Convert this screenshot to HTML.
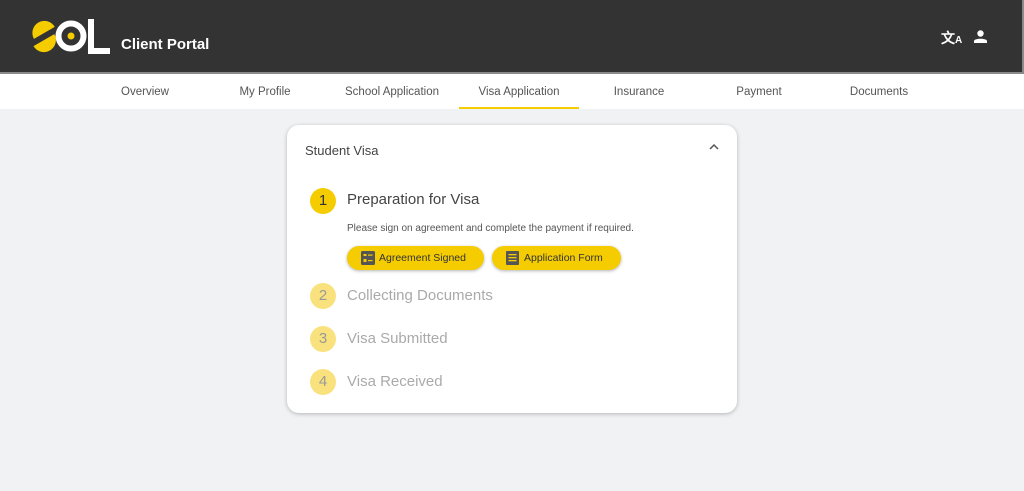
<!DOCTYPE html>
<html><head><meta charset="utf-8"><style>
*{margin:0;padding:0;box-sizing:border-box}
body{width:1024px;height:491px;background:#f1f2f4;font-family:"Liberation Sans",sans-serif;position:relative;overflow:hidden}
.hdr{position:absolute;left:0;top:0;width:1024px;height:74px;background:#333;border:2px solid #8a8a8a;border-top:none;border-left:none}
.cp{position:absolute;left:121px;top:36px;color:#fff;font-size:15px;font-weight:bold}
.nav{position:absolute;left:0;top:74px;width:1024px;height:35px;background:#fff}
.nav span{position:absolute;top:12px;font-size:11.5px;color:#555;text-align:center;width:120px}
.ul{position:absolute;left:459px;top:107px;width:120px;height:2px;background:#f5cc00}
.card{position:absolute;left:287px;top:125px;width:450px;height:288px;background:#fff;border-radius:12px;box-shadow:0 1px 4px rgba(0,0,0,.25)}
.t{position:absolute;left:18px;top:17px;font-size:13px;color:#444}
.chev{position:absolute;right:18px;top:18px}
.step{position:absolute;left:23px;width:26px;height:26px;border-radius:50%;background:#f9e27e;color:#999;font-size:15px;text-align:center;line-height:26px}
.step.a{background:#f5cc00;color:#333}
.lbl{position:absolute;left:60px;font-size:15px;color:#aaa}
.lbl.a{color:#444}
.desc{position:absolute;left:60px;top:98px;font-size:10px;color:#555}
.btn{position:absolute;top:121px;height:24px;border-radius:12px;background:#f5cc00;box-shadow:0 1px 3px rgba(0,0,0,.3);font-size:10.5px;color:#333;display:flex;align-items:center;padding-left:32px}
.btn svg{position:absolute;left:14px;top:5px}
</style></head><body>
<div class="hdr">
<svg style="position:absolute;left:0;top:0" width="120" height="60" viewBox="0 0 120 60">
<g transform="translate(3 0) rotate(-30 42 36)">
<path d="M31 33 A12 12 0 0 1 55 33 Z" fill="#f5cc00"/>
<path d="M27 39 A12 12 0 0 0 51 39 Z" fill="#f5cc00"/>
</g>
<circle cx="71" cy="36" r="12.5" fill="none" stroke="#fff" stroke-width="6"/>
<circle cx="71" cy="36" r="3.5" fill="#f5cc00"/>
<path d="M91 19 V51 H110" fill="none" stroke="#fff" stroke-width="6"/>
</svg>
<div class="cp">Client Portal</div>
<div style="position:absolute;left:941px;top:28px;color:#fff;font-size:14px;font-weight:bold">文<span style="font-size:10px">A</span></div>
<svg style="position:absolute;left:974px;top:30px" width="13" height="13" viewBox="0 0 13 13"><circle cx="6.5" cy="3.5" r="3.2" fill="#fff"/><path d="M0 13 V11 C0 8 13 8 13 11 V13Z" fill="#fff"/></svg>
</div>
<div class="nav">
<span style="left:85px">Overview</span>
<span style="left:205px">My Profile</span>
<span style="left:332px">School Application</span>
<span style="left:459px">Visa Application</span>
<span style="left:579px">Insurance</span>
<span style="left:699px">Payment</span>
<span style="left:819px">Documents</span>
</div>
<div class="ul"></div>
<div class="card">
<div class="t" style="top:18px">Student Visa</div>
<svg class="chev" width="10" height="8" viewBox="0 0 10 8"><path d="M1 6 L5 2 L9 6" fill="none" stroke="#555" stroke-width="1.5"/></svg>
<div class="step a" style="top:63px">1</div><div class="lbl a" style="top:66px">Preparation for Visa</div>
<div class="desc">Please sign on agreement and complete the payment if required.</div>
<div class="btn" style="left:60px;width:137px"><svg width="14" height="14" viewBox="0 0 14 14"><rect width="14" height="14" rx="1.5" fill="#555"/><rect x="2.5" y="3" width="3" height="2" fill="#f5cc00"/><rect x="7" y="3.5" width="4.5" height="1.2" fill="#f5cc00"/><rect x="2.5" y="8" width="3" height="3" fill="#f5cc00"/><rect x="7" y="9" width="4.5" height="1.2" fill="#f5cc00"/></svg>Agreement Signed</div>
<div class="btn" style="left:205px;width:129px"><svg width="13" height="14" viewBox="0 0 13 14"><rect width="13" height="14" rx="1" fill="#555"/><rect x="2.5" y="3" width="8" height="1.3" fill="#f5cc00"/><rect x="2.5" y="6" width="8" height="1.3" fill="#f5cc00"/><rect x="2.5" y="9" width="8" height="1.3" fill="#f5cc00"/></svg>Application Form</div>
<div class="step" style="top:158px">2</div><div class="lbl" style="top:162px">Collecting Documents</div>
<div class="step" style="top:201px">3</div><div class="lbl" style="top:205px">Visa Submitted</div>
<div class="step" style="top:244px">4</div><div class="lbl" style="top:248px">Visa Received</div>
</div>
</body></html>
